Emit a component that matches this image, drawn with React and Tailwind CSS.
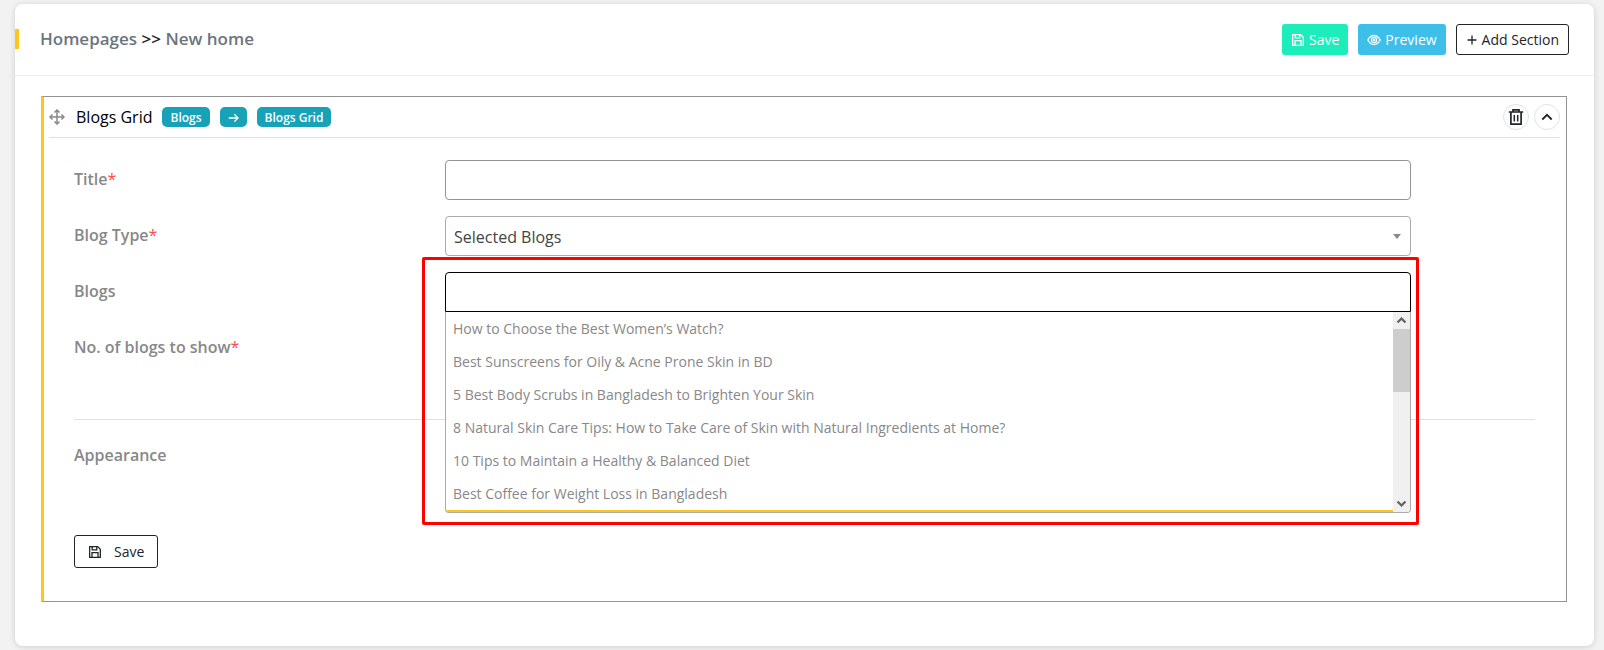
import { useState } from 'react';

const blogOptions = [
  'How to Choose the Best Women’s Watch?',
  'Best Sunscreens for Oily & Acne Prone Skin in BD',
  '5 Best Body Scrubs in Bangladesh to Brighten Your Skin',
  '8 Natural Skin Care Tips: How to Take Care of Skin with Natural Ingredients at Home?',
  '10 Tips to Maintain a Healthy & Balanced Diet',
  'Best Coffee for Weight Loss in Bangladesh',
];

function SaveIcon() {
  return (
    <svg viewBox="0 0 14 14" className="h-[14px] w-[14px]" fill="none" stroke="currentColor" strokeWidth="1.3">
      <path d="M1.65 1.65h8l2.7 2.7v8H1.65z" />
      <path d="M4.2 1.65v3.2h4.6v-3.2M4 12.3V7.7h6v4.6" />
    </svg>
  );
}

function EyeIcon() {
  return (
    <svg viewBox="0 0 14 12" className="h-3 w-[14px]" fill="none" stroke="currentColor" strokeWidth="1.3">
      <path d="M.8 6C2.3 3.2 4.5 1.5 7 1.5S11.700 3.200 13.200 6C11.700 8.800 9.500 10.500 7 10.500S2.300 8.800.8 6z" />
      <circle cx="7" cy="6" r="2.600" />
      <circle cx="7" cy="6" r="0.700" fill="currentColor" />
    </svg>
  );
}

function PlusIcon() {
  return (
    <svg viewBox="0 0 12 12" className="h-3 w-3" fill="none" stroke="currentColor" strokeWidth="1.3">
      <path d="M6 1.500v9M1.500 6h9" />
    </svg>
  );
}

function MoveIcon() {
  return (
    <svg viewBox="0 0 16 16" className="h-4 w-4" fill="none" stroke="currentColor" strokeWidth="1.500">
      <path d="M8 1.500v13M1.500 8h13" />
      <path d="M5.500 3.500L8 1l2.500 2.500M5.500 12.500L8 15l2.500-2.500M3.500 5.500L1 8l2.500 2.500M12.500 5.500L15 8l-2.500 2.500" />
    </svg>
  );
}

function ArrowIcon() {
  return (
    <svg viewBox="0 0 11 10" className="h-[10px] w-[11px]" fill="none" stroke="currentColor" strokeWidth="1.3">
      <path d="M.8 5h9M6.300 1.300L10 5 6.300 8.700" />
    </svg>
  );
}

function TrashIcon() {
  return (
    <svg viewBox="0 0 16 18" className="h-[18px] w-4" fill="none" stroke="currentColor" strokeWidth="1.700">
      <path d="M.8 4h14.400M5 4V1.800h6V4M2.900 4v12.200h10.200V4" />
      <path d="M6.300 7v6.500M9.700 7v6.500" strokeWidth="1.500" />
    </svg>
  );
}

function ChevronUpIcon() {
  return (
    <svg viewBox="0 0 12 8" className="h-2 w-3" fill="none" stroke="currentColor" strokeWidth="1.800">
      <path d="M1.300 6.500L6 1.800l4.700 4.700" />
    </svg>
  );
}

function Badge({ children }) {
  return <span className="flex h-5 items-center rounded-[5px] bg-[#17a2b8] px-2 pt-px">{children}</span>;
}

function Field({ id, label, required, children }) {
  return (
    <div className="mb-4 grid h-10 grid-cols-[371px_minmax(0,1fr)]">
      <label htmlFor={id} className="pt-[7px] leading-6 font-semibold text-[#888]">
        {label}
        {required && <span className="font-normal text-[#ff4d4f]">*</span>}
      </label>
      {children}
    </div>
  );
}

function BlogOptions() {
  return (
    <div className="absolute inset-x-0 top-full flex h-[201px] overflow-hidden rounded-b border border-t-0 border-[#aaa] bg-white">
      <ul role="listbox" aria-label="Blogs" className="min-w-0 flex-1 border-b-2 border-[#ffc519] text-sm text-[#888]">
        {blogOptions.map((title) => (
          <li key={title} role="option" aria-selected="false" className="h-[33px] truncate px-[7px] leading-[34px]">
            {title}
          </li>
        ))}
      </ul>
      <div className="flex w-[17px] flex-col bg-[#f0f0f0] text-[#606060]">
        <svg viewBox="0 0 17 17" className="h-[17px] w-[17px]" fill="none" stroke="currentColor" strokeWidth="2.200">
          <path d="M4.500 10.500l4-4 4 4" />
        </svg>
        <div className="h-[63px] bg-[#cdcdcd]" />
        <svg viewBox="0 0 17 17" className="mt-auto h-[17px] w-[17px]" fill="none" stroke="currentColor" strokeWidth="2.200">
          <path d="M4.500 6.500l4 4 4-4" />
        </svg>
      </div>
    </div>
  );
}

export default function App() {
  const [title, setTitle] = useState('');
  const [search, setSearch] = useState('');

  return (
    <div className="min-h-screen bg-[#f2f2f2] pt-1 pr-[10px] pb-1 pl-[15px] font-['Open_Sans','Noto_Sans',sans-serif] text-base text-[#212529]">
      <main className="rounded-lg bg-white pb-11 shadow-[0_1px_6px_rgba(0,0,0,0.15)]">
        <header className="flex items-center justify-between border-b border-[#ebedf2] py-5 pr-[25px]">
          <h1 className="mb-[2px] flex h-5 items-center border-l-4 border-[#ffc519] pl-[21px] text-[17px] font-semibold">
            <span>
              <a href="#homepages" className="text-[#6c757d]">Homepages</a> &gt;&gt;{' '}
              <a href="#new-home" className="text-[#6c757d]">New home</a>
            </span>
          </h1>
          <div className="flex gap-[10px] text-sm">
            <button className="flex h-[31px] items-center gap-1 rounded-[3px] bg-[#1dedbb] px-[9px] text-white">
              <SaveIcon />
              Save
            </button>
            <button className="flex h-[31px] items-center gap-1 rounded-[3px] bg-[#3ebfea] px-[9px] text-white">
              <EyeIcon />
              Preview
            </button>
            <button className="flex h-[31px] items-center gap-1 rounded-[3px] border border-[#212529] px-[9px]">
              <PlusIcon />
              Add Section
            </button>
          </div>
        </header>

        <section className="mt-5 mr-[27px] ml-[26px] border border-l-[3px] border-[#949494] border-l-[#ffc519]">
          <div className="mr-[6px] ml-[5px] flex h-[41px] items-center border-b border-[#e0e0e0]">
            <span className="mr-[11px] text-[#888]">
              <MoveIcon />
            </span>
            <h2 className="mr-[10px] text-black">Blogs Grid</h2>
            <div className="flex gap-[10px] text-xs font-semibold text-white">
              <Badge>Blogs</Badge>
              <Badge>
                <ArrowIcon />
              </Badge>
              <Badge>Blogs Grid</Badge>
            </div>
            <div className="ml-auto flex gap-[5px]">
              <button aria-label="Delete section" className="flex h-[26px] w-[26px] items-center justify-center rounded-full border border-[#e2e2e2]">
                <TrashIcon />
              </button>
              <button aria-label="Collapse section" className="flex h-[26px] w-[26px] items-center justify-center rounded-full border border-[#e2e2e2]">
                <ChevronUpIcon />
              </button>
            </div>
          </div>

          <form className="pt-[22px] pr-[31px] pb-[33px] pl-[30px]" onSubmit={(e) => e.preventDefault()}>
            <div className="pr-[124px]">
              <Field id="title" label="Title" required>
                <input
                  id="title"
                  value={title}
                  onChange={(e) => setTitle(e.target.value)}
                  className="h-10 rounded border border-[#949494] px-3 outline-none"
                />
              </Field>
              <Field id="blog-type" label="Blog Type" required>
                <div className="relative">
                  <select id="blog-type" className="h-10 w-full appearance-none rounded border border-[#aaa] bg-white px-2 pt-px text-[#444]">
                    <option>Selected Blogs</option>
                  </select>
                  <svg viewBox="0 0 8 5" className="pointer-events-none absolute top-[18px] right-[10px] h-[5px] w-2 fill-[#888]">
                    <path d="M0 0h8L4 5z" />
                  </svg>
                </div>
              </Field>
              <Field id="blogs" label="Blogs">
                <div className="relative z-10">
                  {/* highlight frame around the open dropdown */}
                  <div className="pointer-events-none absolute -top-[15px] -right-2 -left-[23px] h-[268px] rounded-[2px] border-3 border-[#ff0000]" />
                  <input
                    id="blogs"
                    value={search}
                    onChange={(e) => setSearch(e.target.value)}
                    className="h-10 w-full rounded-t border border-black bg-white px-2 outline-none"
                  />
                  <BlogOptions />
                </div>
              </Field>
              <Field id="blog-count" label="No. of blogs to show" required>
                <input id="blog-count" type="number" className="h-10 rounded border border-[#949494] px-3" />
              </Field>
            </div>

            <hr className="mt-[51px] mb-[23px] border-[#e0e0e0]" />
            <h3 className="leading-6 font-semibold text-[#888]">Appearance</h3>
            <button className="mt-[68px] flex h-[33px] items-center gap-3 rounded-[3px] border border-[#212529] px-[13px] text-sm">
              <SaveIcon />
              Save
            </button>
          </form>
        </section>
      </main>
    </div>
  );
}
